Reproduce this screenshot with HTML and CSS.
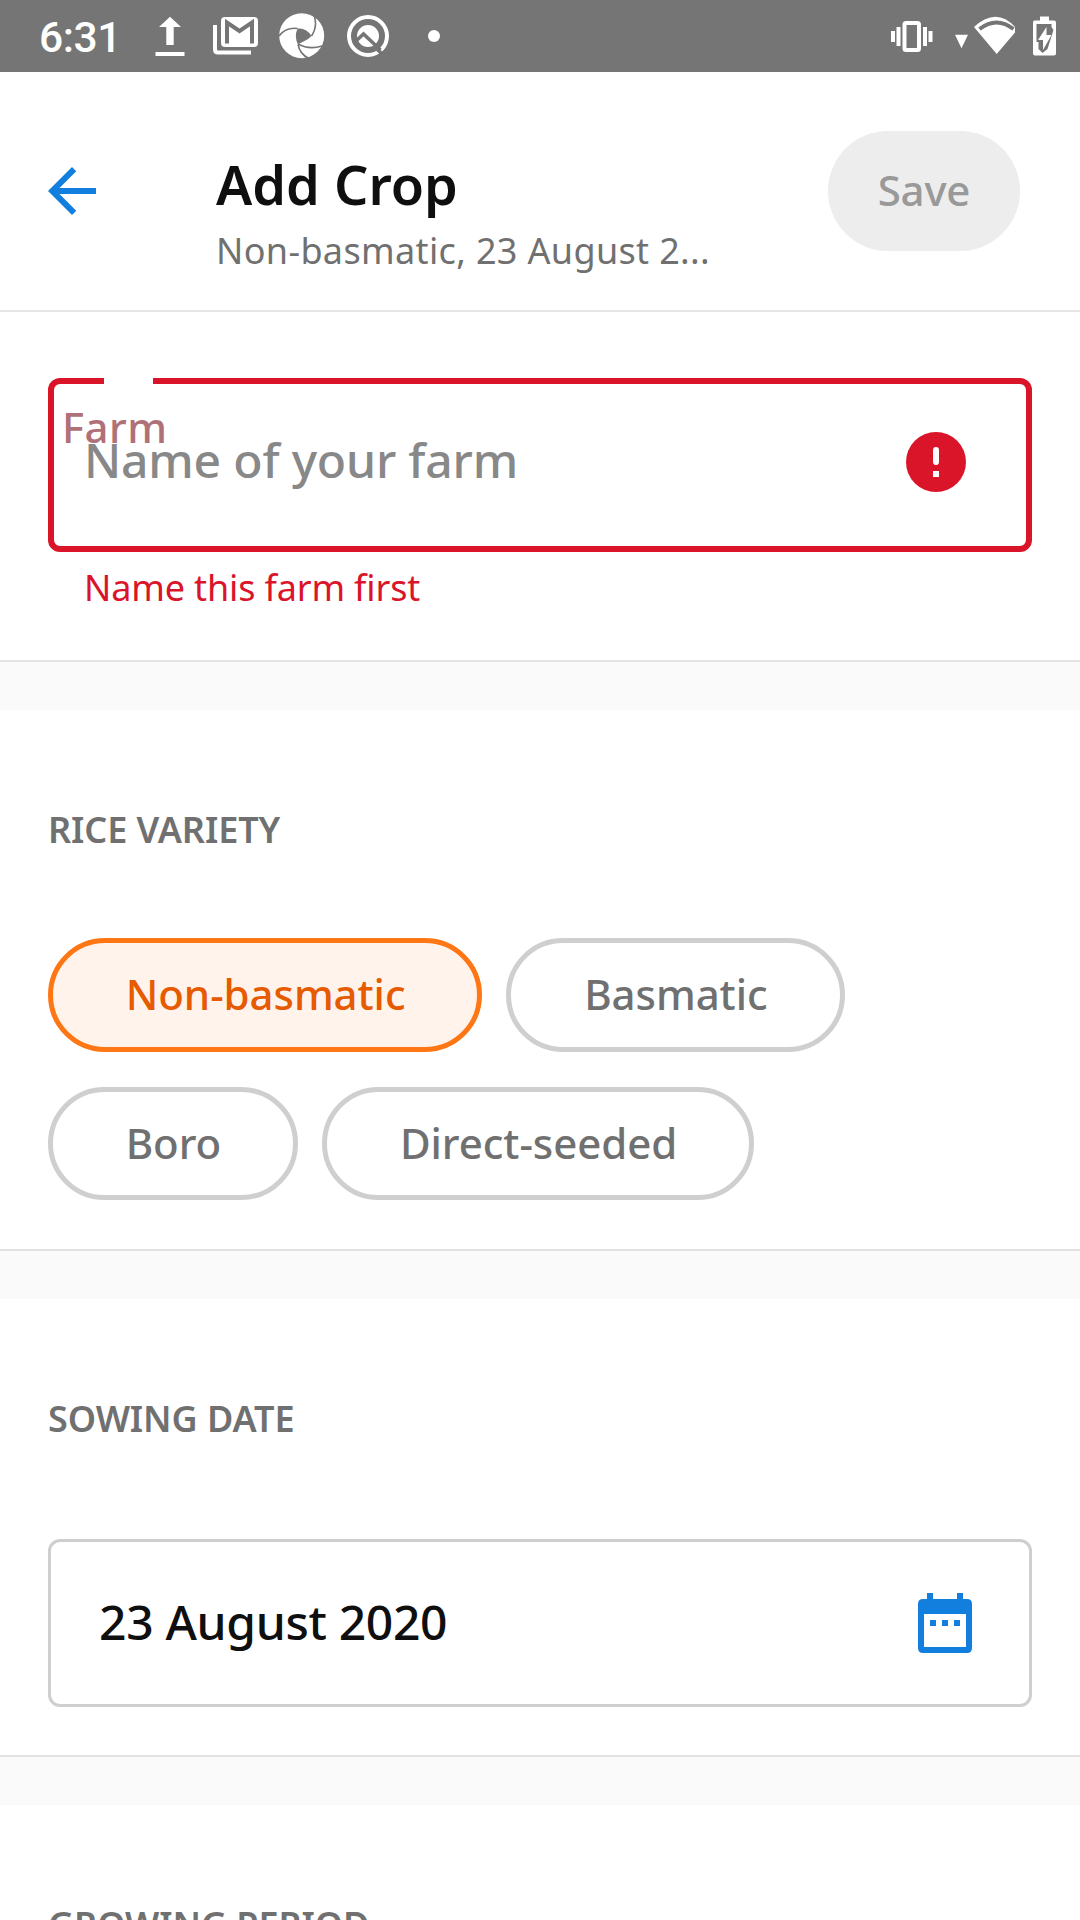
FILE: index.html
```html
<!DOCTYPE html>
<html lang="en">
<head>
<meta charset="utf-8">
<title>Add Crop</title>
<link rel="stylesheet" href="styles.css">
</head>
<body>
<div class="status-bar">
  <span class="clock">6:31</span>
  <svg class="ic-upload" width="30" height="40" viewBox="0 0 30 40" fill="#fff"><path d="M15 .7 26 11h-7.3v18h-7.4V11H4zM.5 36h29v4H.5z"/></svg>
  <svg class="ic-mail" width="46" height="39" viewBox="0 0 46 39"><path d="M2 9v24.500q0 3 3 3h33" fill="none" stroke="#fff" stroke-width="4"/><rect x="8" y="1" width="37" height="30" rx="4" fill="#fff"/><path d="M14 27.500V6.500l12.500 8.500 12.500-8.500v21" fill="none" stroke="#757575" stroke-width="4"/></svg>
  <svg class="ic-aperture" width="46" height="46" viewBox="0 0 46 46"><circle cx="22.700" cy="22.700" r="22.500" fill="#fff"/><path d="M18.500 15.500q9-1 14 7.500-4 4-7 5t-6.500 3.500q-4-8-.5-16z" fill="#757575"/><path d="M0 23q7-9 18.500-7.500M35 2q4 11-2.500 21M43 33q-13 4-24-2M30 45.500q-9-4-11-14" fill="none" stroke="#757575" stroke-width="1.600"/><path d="M31 46l5-5h10v5z" fill="#757575"/></svg>
  <svg class="ic-q" width="44" height="44" viewBox="0 0 44 44"><circle cx="22" cy="22" r="19" fill="none" stroke="#fff" stroke-width="4"/><circle cx="22" cy="22" r="11" fill="#fff"/><path d="M10 27l7.500-7 17 16" fill="none" stroke="#757575" stroke-width="3.500"/><path d="M29 33l7 7" stroke="#757575" stroke-width="3.500"/></svg>
  <span class="dot"></span>
  <svg class="ic-system" width="170" height="42" viewBox="0 0 170 42" fill="#fff"><path d="M1 16h4v11H1zM6.500 12h4v19h-4zM33 12h4v19h-4zM38.500 16h4v11h-4z"/><rect x="14.500" y="8" width="14.500" height="27" rx="1.500" fill="none" stroke="#fff" stroke-width="4"/><path d="M65 19.700h13l-6.500 13.500zM84 12q22.500-20.500 41 0v5.500L106.700 39z"/><path d="M89.500 14q17-13 34 0" fill="none" stroke="#757575" stroke-width="4"/><path d="M144.500 5.500h5.500V1.500h9v4h5q2 0 2 2v31q0 2-2 2h-19q-2 0-2-2v-31q0-2 1.500-2z"/><path d="M146.500 9h15v3l2 3-6 19-5 4-4-4v-7h-2z" fill="#757575"/><path d="M156.500 12v8h5l-8.500 15v-10h-5z"/></svg>
</div>

<header class="app-bar">
  <svg class="back" width="72" height="72" viewBox="0 0 24 24" fill="#127edd"><path d="M20 11H7.830l5.590-5.590L12 4l-8 8 8 8 1.410-1.410L7.830 13H20v-2z"/></svg>
  <div class="heading">
    <h1 class="title">Add Crop</h1>
    <p class="subtitle">Non-basmatic, 23 August 2...</p>
  </div>
  <button class="save" disabled>Save</button>
</header>

<main>
  <section class="section farm">
    <div class="field">
      <span class="notch"></span>
      <label class="field-label">Farm</label>
      <span class="placeholder">Name of your farm</span>
      <svg width="60" height="60" viewBox="2 2 20 20"><circle cx="12" cy="12" r="10" fill="#da1429"/><rect x="11" y="7" width="2" height="6" rx="1" fill="#fff"/><path d="M11 15h2v2h-2z" fill="#fff"/></svg>
    </div>
    <p class="error">Name this farm first</p>
  </section>

  <section class="section variety">
    <h2 class="section-title">RICE VARIETY</h2>
    <div class="chips">
      <span class="chip selected">Non-basmatic</span>
      <span class="chip">Basmatic</span>
      <span class="chip">Boro</span>
      <span class="chip">Direct-seeded</span>
    </div>
  </section>

  <section class="section sowing">
    <h2 class="section-title">SOWING DATE</h2>
    <div class="date-box">
      <span class="date">23 August 2020</span>
      <svg width="54" height="60" viewBox="0 0 54 60" fill="#127edd"><path fill-rule="evenodd" d="M9 0h6v6h24V0h6v6h4q5 0 5 5v44q0 5-5 5H5q-5 0-5-5V11q0-5 5-5h4zM6 21v33h42V21zM12 27h6v6h-6zM24 27h6v6h-6zM36 27h6v6h-6z"/></svg>
    </div>
  </section>

  <section class="section">
    <h2 class="section-title">GROWING PERIOD</h2>
  </section>
</main>
</body>
</html>
```
FILE: styles.css
```css
* { box-sizing: border-box; }

body {
  margin: 0;
  height: 1920px;
  overflow: hidden;
  background: #fff;
  color: #0f0f0f;
  font-family: "Noto Sans", "Open Sans", sans-serif;
}

h1, h2, p { margin: 0; }
svg { display: block; flex: none; }

.status-bar {
  display: flex;
  align-items: flex-start;
  height: 72px;
  padding: 0 20px 0 39px;
  background: #757575;
  color: #fff;
}
.clock {
  width: 116px;
  margin-top: 13px;
  font: 500 42.5px/50px Roboto, sans-serif;
  letter-spacing: -.4px;
}
.ic-upload { margin-top: 16px; }
.ic-mail { margin: 16px 0 0 28px; }
.ic-aperture { margin: 13px 0 0 20px; }
.ic-q { margin: 14px 0 0 21px; }
.dot {
  width: 12px;
  height: 12px;
  margin: 30px 0 0 38px;
  border-radius: 50%;
  background: #fff;
}
.ic-system { margin: 15px 0 0 auto; }

.app-bar {
  display: flex;
  align-items: center;
  height: 240px;
  padding: 0 60px 0 36px;
  border-bottom: 2px solid #e5e5e5;
}
.heading {
  flex: 1;
  padding: 39px 0 0 108px;
}
.title {
  font-size: 54px;
  line-height: 74px;
  font-weight: 600;
}
.subtitle {
  margin: 6px 0 -1px;
  font-size: 36px;
  line-height: 48px;
  letter-spacing: .35px;
  color: #707070;
}
.save {
  width: 192px;
  height: 120px;
  padding: 0 0 2px;
  border: 0;
  border-radius: 60px;
  background: #ededed;
  color: #999;
  font: 500 42px/58px "Noto Sans", sans-serif;
  letter-spacing: -.2px;
}

.section {
  padding: 0 48px;
  border-bottom: 2px solid #e2e2e2;
}
.section + .section { border-top: 48px solid #fafafa; }

.farm { height: 350px; padding-top: 66px; }
.field {
  position: relative;
  display: flex;
  align-items: center;
  justify-content: space-between;
  height: 174px;
  padding: 0 60px 6px 30px;
  border: 6px solid #da1429;
  border-radius: 12px;
}
.notch {
  position: absolute;
  top: -6px;
  left: 50px;
  width: 49px;
  height: 6px;
  background: #fff;
}
.field-label {
  position: absolute;
  top: 14px;
  left: 8px;
  font-size: 42px;
  line-height: 58px;
  font-weight: 500;
  letter-spacing: .4px;
  color: #b07078;
}
.placeholder {
  position: relative;
  padding-bottom: 4px;
  font-size: 48px;
  line-height: 66px;
  font-weight: 500;
  letter-spacing: -.18px;
  color: #888;
}
.error {
  margin: 12px 0 0 36px;
  font-size: 36px;
  line-height: 48px;
  letter-spacing: -.16px;
  color: #da1429;
}

.section-title {
  padding-top: 95px;
  font-size: 36px;
  line-height: 50px;
  font-weight: 600;
  letter-spacing: -.07px;
  color: #707070;
}
.variety { height: 589px; }
.chips {
  display: flex;
  flex-wrap: wrap;
  gap: 35px 24px;
  margin-top: 83px;
}
.chip {
  height: 113.5px;
  padding: 0 72px 0 72.7px;
  border: 5px solid #cfcfcf;
  border-radius: 57px;
  font-size: 42px;
  line-height: 102px;
  font-weight: 500;
  letter-spacing: -.05px;
  color: #707070;
}
.chip.selected {
  border-color: #ff7614;
  background: #fff3eb;
  color: #e65a00;
}

.sowing { height: 506px; }
.date-box {
  display: flex;
  align-items: center;
  justify-content: space-between;
  height: 168px;
  margin-top: 95px;
  padding: 0 57px 0 48px;
  border: 3px solid #cfcfcf;
  border-radius: 12px;
}
.date {
  padding-bottom: 4px;
  font-size: 48px;
  font-weight: 500;
  letter-spacing: -.33px;
}
```
